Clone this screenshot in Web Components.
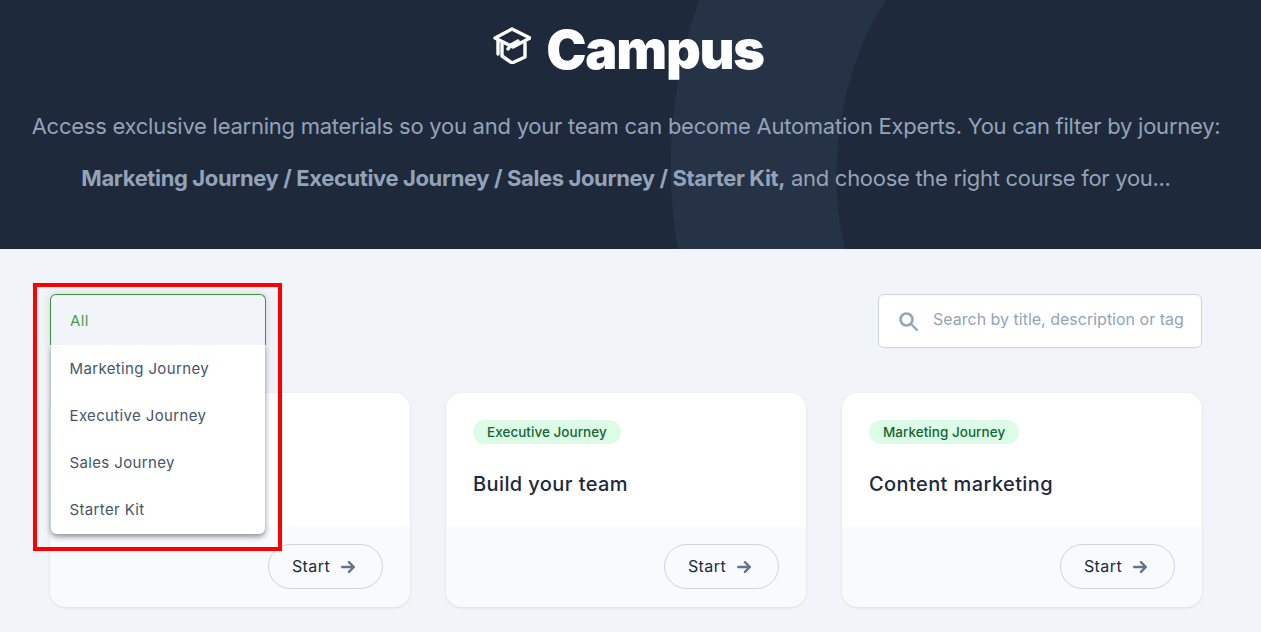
<!DOCTYPE html>
<html><head><meta charset="utf-8">
<style>
html,body{margin:0;height:632px;overflow:hidden;background:#f1f5f9;font-family:Inter,"Liberation Sans",sans-serif}
cp-hero b{font-weight:700;letter-spacing:-.38px}
cp-hero [slot=b]{letter-spacing:-.29px}
</style></head><body>
<template id="t-hero"><style>
:host{display:block;position:relative;height:249px;background:#1e293b;overflow:hidden;box-sizing:border-box;text-align:center;color:#94a3b8}
svg.bg{position:absolute;left:0;top:0}
.c{position:relative;display:flex;flex-direction:column;align-items:center}
h1{margin:16px 0 0;padding-right:4px;display:flex;align-items:center;gap:15px;color:#fff;font-size:54px;line-height:68px;font-weight:900;letter-spacing:-1.3px;height:68px}
h1 svg{margin-top:-10px}
p{margin:0;padding-right:9px;font-size:22px;line-height:34px;white-space:nowrap;letter-spacing:-.25px}
p.a{margin-top:25px}p.b{margin-top:18px}
</style>
<svg class="bg" width="1261" height="249"><path d="M699 0C672 75 663 170 678 249H845C826 170 840 70 886 0Z" fill="#263245"/></svg>
<div class="c"><h1><svg width="38" height="38" viewBox="6 4 38 38" fill="none" stroke="#fff" stroke-width="3.4" stroke-linejoin="round" stroke-linecap="round"><path d="M25 7 43 16 26 25 8 16z"/><path d="M15 21V34L25 41 38 35V21"/><path d="M11 18V32M21 27l3-4 7-4"/></svg>Campus</h1>
<p class="a"><slot name="a"></slot></p><p class="b"><slot name="b"></slot></p></div>
</template>

<template id="t-select"><style>
:host{display:block;position:relative;width:216px;height:51px;font-size:15px;letter-spacing:.36px;color:#475569}
:host::before{content:"";position:absolute;inset:0;box-shadow:0 0 8px rgba(15,23,42,.14);border-radius:6px 6px 0 0}
.box{position:relative;z-index:1;box-sizing:border-box;height:51px;display:flex;align-items:center;padding-left:19px;background:#f1f5f9;border:1px solid #3f9142;border-bottom:0;border-radius:6px 6px 0 0;color:#4a9e4e}
.menu{position:absolute;left:1px;right:1px;top:51px;background:#fff;border-radius:0 0 6px 6px;box-shadow:0 3px 5px rgba(15,23,42,.38),0 0 8px rgba(15,23,42,.14);padding-bottom:1px}
</style><div class="box">All</div><div class="menu"><slot></slot></div></template>

<template id="t-option"><style>:host{display:flex;align-items:center;height:47px;padding-left:18.5px}</style><slot></slot></template>

<template id="t-search"><style>
:host{box-sizing:border-box;display:flex;align-items:center;width:324px;height:54px;background:#fff;border:1px solid #cbd5e1;border-radius:6px;padding-left:19px;gap:14px;font-size:16px;color:#94a3b8;white-space:nowrap}
span{margin-top:-4px}
</style><svg width="21" height="21" viewBox="0 0 21 21" fill="none" stroke="#94a3b8" stroke-width="2.6" stroke-linecap="round"><circle cx="8.5" cy="8.5" r="6"/><path d="M13 13l6 6" stroke-width="2.2"/></svg><span><slot></slot></span></template>

<template id="t-card"><style>
:host{display:flex;flex-direction:column;height:214px;background:#fff;border-radius:16px;overflow:hidden;box-shadow:0 1px 3px rgba(15,23,42,.1)}
.top{flex:1;box-sizing:border-box;padding:27px 27px 0;min-height:134px}
.tag{display:inline-block;height:24px;line-height:24px;padding:0 14px;border-radius:12px;background:#dcfce7;color:#166534;font-size:13.5px;font-weight:500;letter-spacing:.03px}
.tag:empty,h3:empty{display:none}
h3{margin:25px 0 0;font-size:20px;line-height:30px;font-weight:500;letter-spacing:.4px;color:#1e293b}
.foot{height:80px;background:#f8fafc;display:flex;justify-content:flex-end;align-items:flex-start;padding:17px 27px 0;box-sizing:border-box}
.btn{box-sizing:border-box;width:115px;height:45px;border:1px solid #cbd5e1;border-radius:23px;display:flex;align-items:center;justify-content:center;gap:11px;padding:0 4px 2px 0;font-size:16px;font-weight:400;letter-spacing:.4px;color:#1e293b}
.btn svg{margin-top:2px}
</style><div class="top"><div class="tag"><slot name="tag"></slot></div><h3><slot name="title"></slot></h3></div>
<div class="foot"><div class="btn">Start<svg width="14" height="12" viewBox="0 0 14 12" fill="none" stroke="#64748b" stroke-width="2.4" stroke-linecap="round" stroke-linejoin="round"><path d="M1.2 6h11.6M8 1.2 12.8 6 8 10.8"/></svg></div></div></template>

<template id="t-main"><style>
:host{display:block;position:relative;padding:45px 59px 0 50px}
.bar{display:flex;justify-content:space-between;align-items:flex-start;height:99px;position:relative;z-index:2}
.grid{display:grid;grid-template-columns:repeat(3,360px);gap:36px}
.mark{position:absolute;left:33px;top:34px;width:249px;height:268px;box-sizing:border-box;border:4px solid #f00;z-index:3;pointer-events:none}
</style><div class="bar"><slot name="bar"></slot></div><div class="grid"><slot></slot></div><div class="mark"></div></template>

<cp-hero><span slot="a">Access exclusive learning materials so you and your team can become Automation Experts. You can filter by journey:</span><span slot="b"><b>Marketing Journey / Executive Journey / Sales Journey / Starter Kit,</b> and choose the right course for you...</span></cp-hero>
<cp-main>
<cp-select slot="bar"><cp-option>Marketing Journey</cp-option><cp-option>Executive Journey</cp-option><cp-option>Sales Journey</cp-option><cp-option>Starter Kit</cp-option></cp-select>
<cp-search slot="bar">Search by title, description or tag</cp-search>
<cp-card></cp-card>
<cp-card><span slot="tag">Executive Journey</span><span slot="title">Build your team</span></cp-card>
<cp-card><span slot="tag">Marketing Journey</span><span slot="title">Content marketing</span></cp-card>
</cp-main>
<script>
for(const [n,t] of [['cp-hero','t-hero'],['cp-select','t-select'],['cp-option','t-option'],['cp-search','t-search'],['cp-card','t-card'],['cp-main','t-main']]){
customElements.define(n,class extends HTMLElement{constructor(){super();this.attachShadow({mode:'open'}).appendChild(document.getElementById(t).content.cloneNode(true));}});
}
</script>
</body></html>
